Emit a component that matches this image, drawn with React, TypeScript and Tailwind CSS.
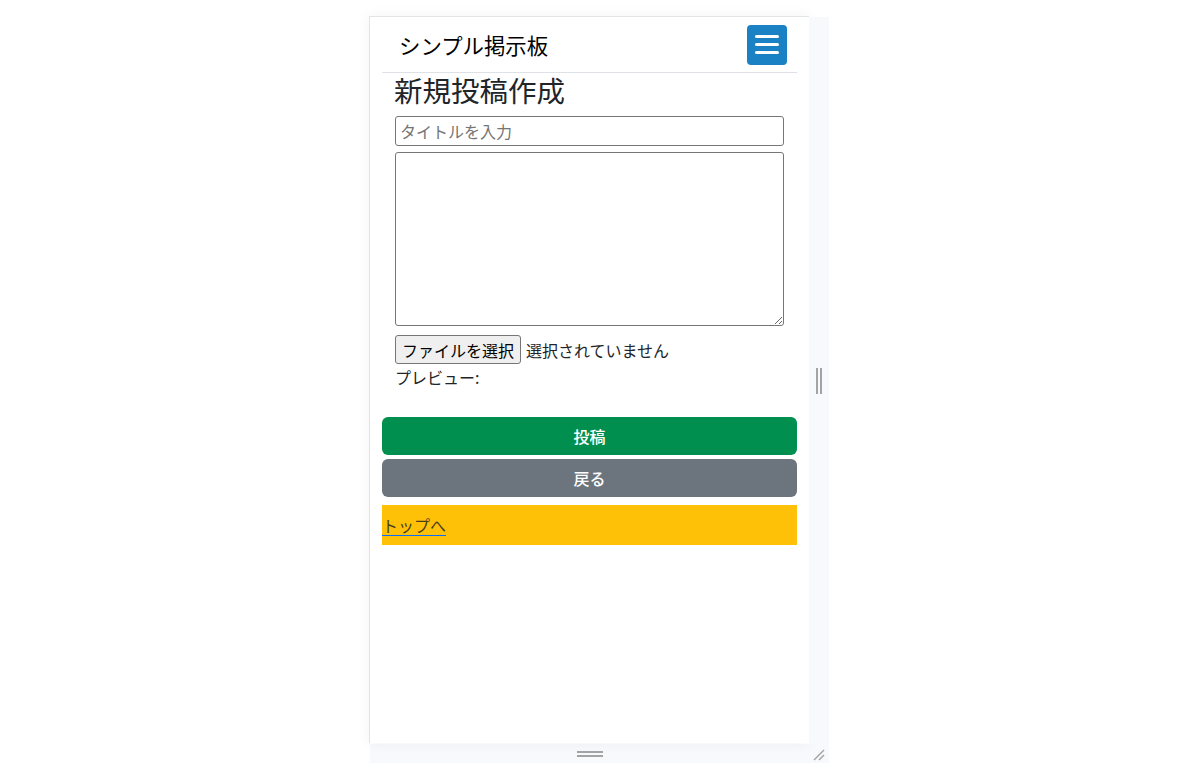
import React from 'react';

const font = { fontFamily: '"Noto Sans CJK JP", "Liberation Sans", sans-serif' };

const Header: React.FC = () => (
  <div className="flex items-center justify-between h-[56px] border-b border-[#dee2e6] pl-[17px] pr-[10px]">
    <span className="text-[21.4px] text-black leading-none">シンプル掲示板</span>
    <button className="w-10 h-10 rounded-[4px] bg-[#1a82c4] flex flex-col items-center justify-center gap-[5px]">
      <span className="block w-[24px] h-[3px] rounded-full bg-white" />
      <span className="block w-[24px] h-[3px] rounded-full bg-white" />
      <span className="block w-[24px] h-[3px] rounded-full bg-white" />
    </button>
  </div>
);

const PostForm: React.FC = () => (
  <div>
    <h2 className="pl-[12px] text-[28.5px] leading-[34px] text-[#212529] mb-[9px]">新規投稿作成</h2>
    <div className="pl-[13px] pr-[13px] flex flex-col">
      <input
        type="text"
        placeholder="タイトルを入力"
        className="h-[30px] border border-[#767676] rounded-[3px] px-[4px] text-[16px] placeholder:text-[#757575] text-black outline-none"
        style={font}
      />
      <textarea
        className="mt-[6px] h-[174px] border border-[#767676] rounded-[3px] resize-y outline-none p-1"
        style={font}
      />
      <div className="flex items-center mt-[9px] text-[16px] text-[#212529]">
        <button className="h-[29px] px-[6px] bg-[#efefef] border border-[#767676] rounded-[3px] text-black">
          ファイルを選択
        </button>
        <span className="ml-[5px]">選択されていません</span>
      </div>
      <div className="text-[16px] text-[#212529] leading-6 mt-[1px]">プレビュー:</div>
    </div>
  </div>
);

const App: React.FC = () => {
  return (
    <div className="min-h-[763px] bg-white pl-[369px] pt-[16px]" style={font}>
      <div className="flex">
        <div className="w-[440px] h-[727px] bg-white border-l border-t border-[#e4e4e7] shadow-[0_0_14px_rgba(0,0,0,0.05)]">
          <div className="px-3">
            <Header />
            <PostForm />
            <div className="mt-[28px] flex flex-col gap-1">
              <button className="h-[38px] rounded-[6px] bg-[#008f4f] text-white text-[16px] font-medium">投稿</button>
              <button className="h-[38px] rounded-[6px] bg-[#6c757d] text-white text-[16px] font-medium">戻る</button>
            </div>
            <div className="mt-[8px] h-10 bg-[#ffc107] flex items-center">
              <a href="#" className="text-[16px] text-[#4a3f1e] underline decoration-[#0d6efd] underline-offset-[3px]">
                トップへ
              </a>
            </div>
          </div>
        </div>
        <div className="w-[20px] mt-px h-[727px] bg-[#f8f9fd] flex items-center justify-center gap-[2px]">
          <span className="block w-[2px] h-[26px] bg-[#a3a3a3]" />
          <span className="block w-[2px] h-[26px] bg-[#a3a3a3]" />
        </div>
      </div>
      <div className="flex ml-px w-[459px] h-[20px] bg-[#f8f9fd]">
        <div className="w-[439px] flex flex-col items-center justify-center gap-[2px]">
          <span className="block w-[26px] h-[2px] bg-[#a3a3a3]" />
          <span className="block w-[26px] h-[2px] bg-[#a3a3a3]" />
        </div>
        <div className="w-[20px] flex items-center justify-center">
          <svg width="14" height="14" viewBox="0 0 14 14">
            <line x1="2" y1="13" x2="12" y2="3" stroke="#a3a3a3" strokeWidth="1.4" />
            <line x1="7" y1="13" x2="12" y2="8" stroke="#a3a3a3" strokeWidth="1.4" />
          </svg>
        </div>
      </div>
    </div>
  );
};

export default App;
